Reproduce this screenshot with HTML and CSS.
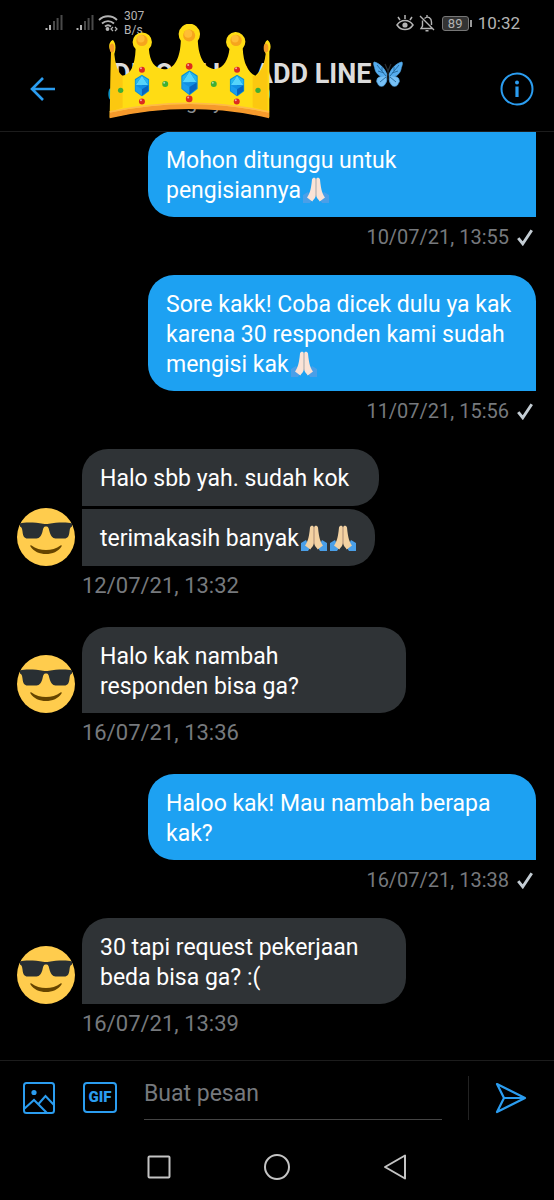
FILE: index.html
```
<!DOCTYPE html>
<html lang="id">
<head>
  <meta charset="UTF-8">
  <meta name="viewport" content="width=device-width, initial-scale=1.0">
  <title>Pesan</title>
  <link rel="stylesheet" href="styles.css">
</head>
<body>

<!-- shared drawings -->
<svg class="defs" width="0" height="0" aria-hidden="true">
  <symbol id="signal" viewBox="0 0 18 18">
    <path d="M1.5 14v2M5 11v5" stroke="#b4b4b4" stroke-width="2"/>
    <path d="M9 7v9M12.600 4v12M16.500 1v15" stroke="#4a4a4a" stroke-width="2"/>
  </symbol>
  <symbol id="tick" viewBox="0 0 16 16">
    <path d="M2 9l4 5 8-12" fill="none" stroke="#c3ccd3" stroke-width="2.600"/>
  </symbol>
  <symbol id="pray" viewBox="0 0 26 26">
    <path class="sleeve" d="M0 18l5-3 4 8-2 3H0zM26 18l-5-3-4 8 2 3h7z"/>
    <path class="hand" d="M9 2.500C9.500 0 12.800 0 12.800 2.500V18c0 3-2.500 4.500-3.500 6.500L4 20.500C6.500 17 8 13 9 2.500z"/>
    <path class="hand" d="M17 2.500C16.500 0 13.200 0 13.200 2.500V18c0 3 2.500 4.500 3.500 6.500l5.300-4C19.500 17 18 13 17 2.500z"/>
    <path d="M13 2v17" stroke="#d8ab8c" stroke-width=".7"/>
  </symbol>
  <symbol id="cool" viewBox="0 0 58 58">
    <circle cx="29" cy="29" r="29" fill="#ffcc4d"/>
    <path d="M14.500 37.500c8 6 21 6 29 0 1-.5 1.500 0 1 1-6 10-25 10-31 0-.5-1 0-1.500 1-1z" fill="#664500"/>
    <path d="M3 15.500c5-1.500 16-1 23 .3 2 .3 4 .3 6 0 7-1.300 18-1.800 23-.3v3c-2 1-2 2-2.500 5-.5 5-2 7-5 7h-9c-3 0-5-3-6-7-.7-3-1-5-3.500-5s-2.800 2-3.500 5c-1 4-3 7-6 7h-9c-3 0-4.500-2-5-7-.5-3-.5-4-2.500-5z" fill="#292f33"/>
  </symbol>
  <symbol id="gem" viewBox="0 0 44 66">
    <path d="M22 0l22 14v35L22 66 0 49V14z" fill="#0a8fd6"/>
    <path d="M22 3l19 29H3z" fill="#55d4fb"/>
    <path d="M22 3l19 13v16zM22 3L3 16v16z" fill="#24b6f0"/>
    <path d="M3 32h19v31L3 48z" fill="#1b9ded"/>
    <path d="M41 32H22v31l19-15z" fill="#0764c0"/>
    <path d="M3 32h38L22 44z" fill="#118fe3"/>
  </symbol>
</svg>

<div class="status">
  <div class="status-left">
    <svg class="signal"><use href="#signal"/></svg>
    <svg class="signal"><use href="#signal"/></svg>
    <svg class="wifi" viewBox="0 0 20 18" fill="none" stroke="#b4b4b4" stroke-width="1.800">
      <path d="M1 6C6 1 14 1 19 6M4 9.500c3.500-3.300 8.500-3.300 12 0M7 12.500c2-1.700 4-1.700 6 0"/>
      <circle cx="9.500" cy="15" r="1" fill="#b4b4b4"/>
      <path d="M15 13l-2 2 2 2M17 13l2 2-2 2" stroke-width="1.200"/>
    </svg>
    <span class="speed">307<br>B/s</span>
  </div>
  <div class="status-right">
    <svg class="eye" viewBox="0 0 18 18" fill="none" stroke="#b4b4b4" stroke-width="1.500">
      <path d="M1 11c4-6 12-6 16 0-4 6-12 6-16 0zM9 5V1M4 6L2 3M14 6l2-3"/>
      <circle cx="9" cy="11" r="2.600" fill="#b4b4b4" stroke="none"/>
    </svg>
    <svg class="bell" viewBox="0 0 16 18" fill="none" stroke="#b4b4b4" stroke-width="1.400">
      <path d="M5.500 4.500C9 1.500 12.500 4 12.500 8v3M3.500 6.500V12L2 14.500h11M8 3V1M1 2l14 14M6.500 16.800h3"/>
    </svg>
    <span class="battery">89</span>
    <span class="clock">10:32</span>
  </div>
</div>

<header class="topbar">
  <button class="icon-btn" aria-label="Kembali">
    <svg width="26" height="24" viewBox="0 0 26 24" fill="none" stroke="#2b9df0" stroke-width="2.600"><path d="M25 12H2M13 1L2 12l11 11"/></svg>
  </button>
  <div class="who">
    <h1>DISORE UP ADD LINE<svg class="butterfly" viewBox="0 0 30 27">
      <path d="M14 14C12 7 6 2 1 1c-1 3 1 5 1 7 1 5 5 8 11 8zM16 14c2-7 8-12 13-13 1 3-1 5-1 7-1 5-5 8-11 8z" fill="#55acee" stroke="#55acee" stroke-width=".8"/>
      <path d="M13 15c-5 0-9 1-9 4-1 2 1 3 1 4 1 3 6 3 7 0 2-2 2-5 1-8zM17 15c5 0 9 1 9 4 1 2-1 3-1 4-1 3-6 3-7 0-2-2-2-5-1-8z" fill="#77c0f5" stroke="#55acee" stroke-width=".8"/>
      <path d="M13 15L4 4M11 12L5 10M9 10V6M17 15l9-11M19 12l6-2M21 10V6M13 16l-6 5M17 16l6 5" fill="none" stroke="#226699" stroke-width=".9"/>
      <path d="M15 10v9M15 10l-3-7M15 10l3-7" fill="none" stroke="#292f33" stroke-width="1.200"/>
    </svg></h1>
    <p>@disoregaly</p>
  </div>
  <button class="icon-btn" aria-label="Info">
    <svg width="34" height="34" viewBox="0 0 34 34" fill="none" stroke="#2b9df0" stroke-width="2"><circle cx="17" cy="17" r="15.500"/><path d="M17 14.500V25" stroke-width="3.200"/><circle cx="17" cy="10.500" r="2" fill="#2b9df0" stroke="none"/></svg>
  </button>

  <svg class="crown" viewBox="24 12 490 288" aria-hidden="true">
    <ellipse cx="31" cy="222" rx="6" ry="17" fill="#0d93c4"/>
    <ellipse cx="505" cy="222" rx="6" ry="17" fill="#0d93c4"/>
    <path d="M33 94C22 80 30 62 39 60c8 8 10 25 4 42 3 30 10 56 24 65 24-2 38-28 40-80a29 29 0 1 1 40 0c2 35 16 60 46 61 32-1 48-35 50-86a32 32 0 1 1 51 0c2 51 22 85 53 85 25-2 39-30 42-60a29 29 0 1 1 40-2c2 42 15 72 38 82 20-16 28-38 31-65-6-17-6-34 5-42 8 4 14 20 6 34v198Q268 238 29 293z" fill="#ffdc14"/>
    <path d="M33 100h8c4 34 14 61 27 67v96l-38 13zM500 100h4v174l-45-12v-94h10c15-8 25-36 31-68z" fill="#f9b80c" opacity=".55"/>
    <path d="M29 278Q268 226 508 278v17Q268 240 29 295z" fill="#f69a2c"/>
    <path d="M29 276Q268 224 508 276" fill="none" stroke="#ffb94a" stroke-width="5"/>
    <ellipse cx="36" cy="84" rx="7" ry="14" fill="#f39a25"/>
    <ellipse cx="499" cy="84" rx="7" ry="14" fill="#f39a25"/>
    <g fill="#f6a51d"><circle cx="126" cy="61" r="17"/><circle cx="268" cy="46" r="18"/><circle cx="409" cy="61" r="17"/></g>
    <g fill="#ffbd35"><circle cx="123" cy="56" r="11"/><circle cx="265" cy="41" r="12"/><circle cx="406" cy="56" r="11"/></g>
    <use href="#gem" x="104" y="164" width="44" height="66"/>
    <use href="#gem" x="244" y="151" width="50" height="75"/>
    <use href="#gem" x="390" y="164" width="44" height="66"/>
    <g fill="#dc2a20"><circle cx="126" cy="149" r="9"/><circle cx="268" cy="139" r="10"/><circle cx="412" cy="149" r="9"/><circle cx="126" cy="245" r="9"/><circle cx="268" cy="237" r="10"/><circle cx="411" cy="245" r="9"/></g>
    <g fill="#3fae35"><circle cx="62" cy="211" r="8"/><circle cx="196" cy="192" r="9"/><circle cx="342" cy="192" r="9"/><circle cx="475" cy="211" r="8"/></g>
    <g fill="#fff" opacity=".6"><circle cx="123" cy="145" r="3"/><circle cx="265" cy="135" r="3"/><circle cx="409" cy="145" r="3"/><circle cx="123" cy="241" r="3"/><circle cx="265" cy="233" r="3"/><circle cx="408" cy="241" r="3"/><circle cx="193" cy="188" r="3"/><circle cx="339" cy="188" r="3"/></g>
  </svg>
</header>

<main class="chat">
  <section class="sent">
    <p class="bubble joined">Mohon ditunggu untuk<br>pengisiannya<svg class="emoji pale"><use href="#pray"/></svg></p>
    <p class="meta">10/07/21, 13:55 <svg class="tick"><use href="#tick"/></svg></p>
  </section>

  <section class="sent">
    <p class="bubble">Sore kakk! Coba dicek dulu ya kak karena 30 responden kami sudah mengisi kak<svg class="emoji pale"><use href="#pray"/></svg></p>
    <p class="meta">11/07/21, 15:56 <svg class="tick"><use href="#tick"/></svg></p>
  </section>

  <section class="received">
    <svg class="avatar"><use href="#cool"/></svg>
    <div class="bubbles">
      <p class="bubble">Halo sbb yah. sudah kok&nbsp;&nbsp;</p>
      <p class="bubble joined">terimakasih banyak<svg class="emoji"><use href="#pray"/></svg><svg class="emoji"><use href="#pray"/></svg></p>
    </div>
    <p class="meta">12/07/21, 13:32</p>
  </section>

  <section class="received">
    <svg class="avatar"><use href="#cool"/></svg>
    <div class="bubbles">
      <p class="bubble wide">Halo kak nambah<br>responden bisa ga?</p>
    </div>
    <p class="meta">16/07/21, 13:36</p>
  </section>

  <section class="sent">
    <p class="bubble">Haloo kak! Mau nambah berapa kak?</p>
    <p class="meta">16/07/21, 13:38 <svg class="tick"><use href="#tick"/></svg></p>
  </section>

  <section class="received">
    <svg class="avatar"><use href="#cool"/></svg>
    <div class="bubbles">
      <p class="bubble wide">30 tapi request pekerjaan<br>beda bisa ga? :(</p>
    </div>
    <p class="meta">16/07/21, 13:39</p>
  </section>
</main>

<form class="composer">
  <button type="button" class="icon-btn" aria-label="Gambar">
    <svg width="32" height="32" viewBox="0 0 32 32" fill="none" stroke="#2b9df0" stroke-width="2"><rect x="1" y="1" width="30" height="30" rx="2.500"/><path d="M1 27l10-9 13 13M15.500 22l7-8 8.500 9"/><circle cx="11" cy="10.500" r="2.600" fill="#2b9df0" stroke="none"/></svg>
  </button>
  <button type="button" class="gif">GIF</button>
  <input type="text" placeholder="Buat pesan" aria-label="Buat pesan">
  <button type="submit" class="send" aria-label="Kirim">
    <svg width="32" height="32" viewBox="0 0 32 32" fill="none" stroke="#2b9df0" stroke-width="2.200" stroke-linejoin="round"><path d="M2 2l28 14L2 30l7-14zM9 16h20"/></svg>
  </button>
</form>

<nav class="system">
  <button class="icon-btn" aria-label="Terbaru"><svg width="26" height="26" viewBox="0 0 26 26" fill="none" stroke="#c4c4c4" stroke-width="2"><rect x="2.500" y="2.500" width="21" height="21" rx="1"/></svg></button>
  <button class="icon-btn" aria-label="Beranda"><svg width="26" height="26" viewBox="0 0 26 26" fill="none" stroke="#c4c4c4" stroke-width="2"><circle cx="13" cy="13" r="12"/></svg></button>
  <button class="icon-btn" aria-label="Kembali"><svg width="26" height="26" viewBox="0 0 26 26" fill="none" stroke="#c4c4c4" stroke-width="2" stroke-linejoin="round"><path d="M23 1.500v23L3 13z"/></svg></button>
</nav>

</body>
</html>
```
FILE: styles.css
```
* {
  box-sizing: border-box;
}
body {
  margin: 0;
  min-height: 100vh;
  display: flex;
  flex-direction: column;
  background: #000;
  color: #fff;
  font-family: Roboto, sans-serif;
  font-size: 23px;
  line-height: 30px;
}
h1, p {
  margin: 0;
}
button {
  padding: 0;
  border: 0;
  background: none;
  font-family: inherit;
}
svg {
  flex-shrink: 0;
}
.defs {
  position: absolute;
}
.icon-btn {
  display: flex;
  align-items: center;
  justify-content: center;
}

/* status bar */
.status {
  height: 46px;
  padding: 0 34px 0 45px;
  display: flex;
  justify-content: space-between;
  color: #b4b4b4;
}
.status-left, .status-right {
  display: flex;
  align-items: center;
}
.signal {
  width: 18px;
  height: 18px;
  margin-right: 13px;
}
.signal + .signal {
  margin-right: 4px;
}
.wifi {
  width: 20px;
  height: 18px;
  margin-right: 6px;
}
.speed {
  font-size: 12px;
  line-height: 14px;
}
.eye {
  width: 18px;
  height: 18px;
  margin-right: 5px;
}
.bell {
  width: 16px;
  height: 18px;
  margin-right: 7px;
}
.battery {
  position: relative;
  width: 27px;
  height: 15px;
  margin-right: 9px;
  border: 1px solid #777;
  border-radius: 3px;
  background: #333;
  font-size: 13px;
  line-height: 13px;
  text-align: center;
}
.battery::after {
  content: "";
  position: absolute;
  top: 3px;
  right: -4px;
  width: 2px;
  height: 7px;
  background: #999;
}
.clock {
  font-size: 17px;
}

/* header */
.topbar {
  position: relative;
  height: 86px;
  margin-bottom: -1px;
  padding: 0 20px 0 30px;
  display: flex;
  align-items: center;
  border-bottom: 1px solid #1c1c1c;
}
.who {
  flex: 1;
  padding-left: 57px;
  padding-bottom: 6px;
}
.who h1 {
  color: #dcdcdc;
  font-size: 27px;
  font-weight: 700;
  line-height: 32px;
  white-space: nowrap;
}
.who p {
  color: #8a8d91;
  font-size: 20px;
  line-height: 24px;
}
.butterfly {
  width: 30px;
  height: 27px;
  margin-left: 2px;
  vertical-align: -5px;
}
.crown {
  position: absolute;
  top: -22px;
  left: 108px;
  width: 163px;
  height: 96px;
}

/* messages */
.chat {
  flex: 1;
}
.bubble {
  width: fit-content;
  min-height: 57px;
  padding: 15px 18px 11px;
  border-radius: 26px;
}
.sent {
  display: flex;
  flex-direction: column;
  align-items: flex-end;
  padding-right: 18px;
  margin-bottom: 25px;
}
.sent .bubble {
  width: 388px;
  max-width: 80%;
  background: #1da1f2;
  border-bottom-right-radius: 0;
}
.sent .joined {
  border-top-right-radius: 0;
}
.received {
  display: grid;
  grid-template-columns: 58px 1fr;
  column-gap: 7px;
  align-items: end;
  padding-left: 17px;
  margin-bottom: 28px;
}
.received:last-child {
  margin-bottom: 20px;
}
.received .meta {
  grid-column: 2;
}
.bubbles {
  display: flex;
  flex-direction: column;
  gap: 3px;
}
.received .bubble {
  background: #2f3336;
  border-bottom-left-radius: 0;
}
.received .joined {
  border-top-left-radius: 0;
}
.received .wide {
  width: 324px;
}
.avatar {
  width: 58px;
  height: 58px;
}
.meta {
  padding-top: 7px;
  color: #76797d;
  font-size: 22px;
  line-height: 26px;
}
.sent .meta {
  font-size: 20px;
}
.tick {
  width: 18px;
  height: 18px;
  margin-left: 2px;
  margin-right: 2px;
  vertical-align: -2px;
}
.emoji {
  width: 26px;
  height: 26px;
  margin: 0 1px 0 2px;
  vertical-align: -5px;
  fill: #f3d2a2;
}
.sleeve {
  fill: #4a9fe8;
}
.pale {
  fill: #fbe3d6;
}

/* message box */
.composer {
  height: 74px;
  padding: 0 27px 0 23px;
  display: flex;
  align-items: center;
  border-top: 1px solid #1c1c1c;
}
.gif {
  width: 34px;
  height: 31px;
  margin: 0 27px 0 28px;
  border: 2px solid #2b9df0;
  border-radius: 4px;
  color: #2b9df0;
  font-size: 15px;
  font-weight: 900;
  line-height: 27px;
}
.composer input {
  flex: 1;
  min-width: 0;
  height: 44px;
  padding: 0 0 8px;
  margin-right: 26px;
  border: 0;
  border-bottom: 1px solid #444;
  background: none;
  color: #fff;
  font: inherit;
}
.composer input::placeholder {
  color: #76797d;
}
.send {
  display: flex;
  align-items: center;
  height: 44px;
  padding-left: 26px;
  border-left: 1px solid #222;
}

/* android buttons */
.system {
  height: 66px;
  display: flex;
  align-items: center;
  justify-content: center;
  gap: 92px;
}
```
